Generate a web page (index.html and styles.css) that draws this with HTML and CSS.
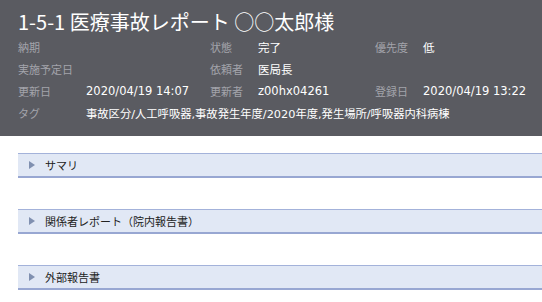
FILE: index.html
```html
<!DOCTYPE html>
<html lang="ja">
<head>
<meta charset="utf-8">
<link rel="stylesheet" href="styles.css">
</head>
<body>
<header class="head">
  <h1 class="title">1-5-1 医療事故レポート ○○太郎様</h1>
  <div class="meta">
    <span class="lbl">納期</span><span class="val"></span>
    <span class="lbl">状態</span><span class="val">完了</span>
    <span class="lbl">優先度</span><span class="val">低</span>

    <span class="lbl">実施予定日</span><span class="val"></span>
    <span class="lbl">依頼者</span><span class="val">医局長</span>
    <span class="lbl"></span><span class="val"></span>

    <span class="lbl">更新日</span><span class="val">2020/04/19 14:07</span>
    <span class="lbl">更新者</span><span class="val">z00hx04261</span>
    <span class="lbl">登録日</span><span class="val">2020/04/19 13:22</span>

    <span class="lbl">タグ</span><span class="val tags">事故区分/人工呼吸器,事故発生年度/2020年度,発生場所/呼吸器内科病棟</span>
  </div>
</header>
<main class="sections">
  <div class="panel"><span class="arrow"></span><span class="ptitle">サマリ</span></div>
  <div class="panel"><span class="arrow"></span><span class="ptitle">関係者レポート（院内報告書）</span></div>
  <div class="panel"><span class="arrow"></span><span class="ptitle">外部報告書</span></div>
</main>
</body>
</html>
```
FILE: styles.css
```css
html, body {
  margin: 0;
  padding: 0;
  background: #ffffff;
}
body {
  font-family: "Noto Sans CJK JP", "Noto Sans", sans-serif;
  font-size: 11px;
  color: #333;
}
.head {
  background: #5a5b61;
  padding: 8px 0 12px 18px;
}
.title {
  margin: 0;
  font-weight: normal;
  font-size: 20px;
  line-height: 28px;
  color: #ffffff;
  white-space: nowrap;
}
.meta {
  display: grid;
  grid-template-columns: 68px 124px 48px 117px 48px 1fr;
  grid-auto-rows: 22px;
  align-items: center;
  white-space: nowrap;
}
.lbl {
  color: #a3a4ab;
}
.val {
  color: #ffffff;
  font-family: "DejaVu Sans", "Noto Sans CJK JP", sans-serif;
  font-size: 11.5px;
}
.tags {
  grid-column: 2 / 7;
  font-size: 11.3px;
}
.sections {
  display: flex;
  flex-direction: column;
  gap: 31px;
  padding: 17px 0 0 18px;
}
.panel {
  display: flex;
  align-items: center;
  height: 22px;
  background: #e1e8f5;
  border-top: 1px solid #a3b2da;
  border-bottom: 2px solid #98a7d2;
}
.arrow {
  width: 0;
  height: 0;
  margin-left: 11px;
  border-left: 6px solid #8090b0;
  border-top: 4px solid transparent;
  border-bottom: 4px solid transparent;
}
.ptitle {
  margin-left: 10px;
  color: #222;
  font-size: 11px;
}
```
